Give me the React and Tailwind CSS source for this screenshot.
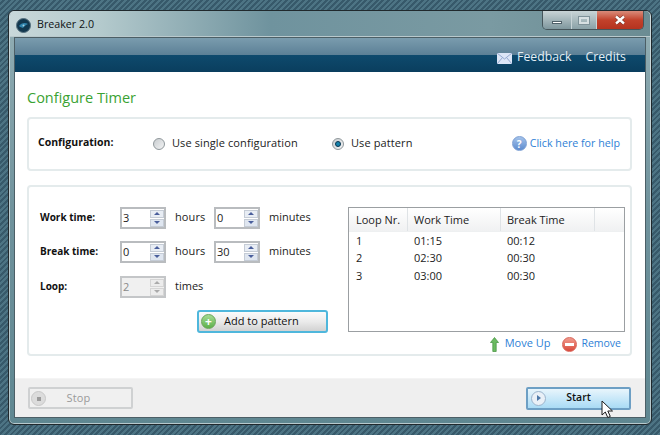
const font = "font-['Open_Sans','Noto_Sans',sans-serif]";

const rows = [
  { loop: "1", work: "01:15", rest: "00:12" },
  { loop: "2", work: "02:30", rest: "00:30" },
  { loop: "3", work: "03:00", rest: "00:30" },
];

function Spinner({ value, disabled }) {
  return (
    <div className={`flex h-[22px] w-[46px] items-center border-2 ${disabled ? "border-[#c4c6c8] bg-[#f0f0f0]" : "border-[#b9bcbf] bg-white"}`}>
      <input
        readOnly
        value={value}
        className={`h-full w-[28px] bg-transparent pb-[1px] pl-[1px] text-[11px] outline-none ${disabled ? "text-[#8a8a8a]" : "text-[#222]"}`}
      />
      <div className="flex w-[14px] flex-col gap-px">
        <span className={`flex h-[8px] items-center justify-center border ${disabled ? "border-[#d5d5d5] bg-[#ececec]" : "border-[#c5ccd6] bg-[#e8edf4]"}`}>
          <span className={`h-0 w-0 border-x-[3px] border-b-[3px] border-x-transparent ${disabled ? "border-b-[#aaa]" : "border-b-[#4a5f9c]"}`} />
        </span>
        <span className={`flex h-[8px] items-center justify-center border ${disabled ? "border-[#d5d5d5] bg-[#ececec]" : "border-[#c5ccd6] bg-[#dfe6f0]"}`}>
          <span className={`h-0 w-0 border-x-[3px] border-t-[3px] border-x-transparent ${disabled ? "border-t-[#aaa]" : "border-t-[#4a5f9c]"}`} />
        </span>
      </div>
    </div>
  );
}

function Radio({ checked, label, className }) {
  return (
    <label className={`flex items-center gap-[7px] tracking-[0.1px] ${className}`}>
      <span className="flex h-[12px] w-[12px] items-center justify-center rounded-full border border-[#8f979b] bg-gradient-to-br from-[#c9cdd0] to-[#f2f3f4]">
        {checked ? <span className="h-[6px] w-[6px] rounded-full border border-[#0b3550] bg-[#1583ad]" /> : null}
      </span>
      <span className="pb-[2px]">{label}</span>
    </label>
  );
}

function TimeRow({ label, hours, minutes }) {
  return (
    <div className="flex h-[22px] items-center">
      <span className="w-[80px] pb-[2px] text-[10px] font-bold text-[#111]">{label}</span>
      <Spinner value={hours} />
      <span className="ml-[9px] w-[39px] pb-[2px] tracking-[0.1px]">hours</span>
      <Spinner value={minutes} />
      <span className="ml-[9px] pb-[2px]">minutes</span>
    </div>
  );
}

function CircleIcon({ from, to, border, children }) {
  return (
    <span className={`flex h-[15px] w-[15px] items-center justify-center rounded-full border bg-gradient-to-b ${from} ${to} ${border}`}>
      {children}
    </span>
  );
}

function Cursor() {
  return (
    <svg className="absolute left-[601px] top-[400px]" width="13" height="19" viewBox="0 0 13 19">
      <path d="M1 1 L1 15 L4.3 12 L6.8 17.6 L9.3 16.4 L6.8 11 L11.5 11 Z" fill="#fff" stroke="#1c1c1c" strokeWidth="1" strokeLinejoin="round" />
    </svg>
  );
}

export default function App() {
  return (
    <div className={`relative h-[435px] w-[660px] overflow-hidden bg-[#3f6473] bg-[repeating-linear-gradient(135deg,#4d7484_0px,#4d7484_2px,#37596a_2px,#37596a_4px)] pl-[8px] pt-[10px] text-[11px] text-[#222] ${font}`}>
      <div className="flex h-[415px] w-[644px] flex-col rounded-[6px] border border-[#20292d] bg-gradient-to-b from-[#93afb5] via-[#6f929c] to-[#5f8791] pl-[5px] pr-[5px] shadow-[inset_0_0_0_1px_rgba(255,255,255,0.55)]">
        <div className="-ml-[4px] -mr-[4px] flex h-[26px] shrink-0 items-start justify-between rounded-t-[5px] border-b border-[#b9c9cc] bg-[linear-gradient(90deg,#c8d8da_0px,#b4cacd_90px,#6f939e_260px,#7a9aa2_480px,#6b8c93_100%)] pl-[6px] pr-[6px]">
          <div className="flex h-[25px] items-center gap-[6px] pt-[3px]">
            <svg width="15" height="15" viewBox="0 0 15 15">
              <circle cx="7.5" cy="7.5" r="7" fill="#12384f" stroke="#55707e" strokeWidth="1" />
              <path d="M3 8 C5 5 9 4 12 6 C10 7 8 8 7 10 C5.5 9.5 4 9 3 8 Z" fill="#2f84ad" />
              <circle cx="7.5" cy="7.5" r="1" fill="#a8d0e0" />
            </svg>
            <span className="pb-[1px] text-[10.7px] text-[#0e1214]">Breaker 2.0</span>
          </div>
          <div className="flex h-[19px] overflow-hidden rounded-b-[5px] border border-t-0 border-[#46555b]">
            <span className="flex w-[29px] items-center justify-center border-r border-[#c7d3d6] bg-gradient-to-b from-[#c9d4d6] to-[#7f979e]">
              <span className="mt-[5px] h-[3px] w-[10px] border border-[#50616a] bg-white" />
            </span>
            <span className="flex w-[25px] items-center justify-center border-r border-[#c7d3d6] bg-gradient-to-b from-[#c9d4d6] to-[#8aa1a7]">
              <span className="h-[7px] w-[10px] border-2 border-[#d8e0e2] outline outline-1 outline-[#7f9299]" />
            </span>
            <span className="flex w-[46px] items-center justify-center bg-gradient-to-b from-[#d98b7a] via-[#c2412b] to-[#b5331f]">
              <svg width="12" height="10" viewBox="0 0 12 10">
                <path d="M2 1.5 L10 8.5 M10 1.5 L2 8.5" stroke="#6b2a20" strokeWidth="3.6" />
                <path d="M2 1.5 L10 8.5 M10 1.5 L2 8.5" stroke="#fff" strokeWidth="2.4" />
              </svg>
            </span>
          </div>
        </div>

        <div className="flex h-[381px] w-[632px] flex-col border border-[#4c5f66]">
          <div className="flex h-[34px] shrink-0 items-center justify-end bg-[linear-gradient(180deg,#7a9cae_0%,#5c8096_50%,#0e4a6d_50%,#0a3e5e_100%)] pr-[19px] pt-[6px] text-[12.3px] text-[#e4eef4]">
            <svg width="15" height="11" viewBox="0 0 15 11" className="mr-[5px]">
              <rect width="15" height="11" fill="#dce6f7" />
              <path d="M0 0 L7.5 6 L15 0 M0 11 L5.5 4.5 M15 11 L9.5 4.5" fill="none" stroke="#93a8cf" strokeWidth="1" />
            </svg>
            <span className="pb-[2px]">Feedback</span>
            <span className="ml-[14px] pb-[2px]">Credits</span>
          </div>

          <main className="flex h-[306px] shrink-0 flex-col bg-white pl-[12px] pr-[13px]">
            <h1 className="flex h-[45px] shrink-0 items-center pt-[7px] text-[14.5px] font-normal text-[#3aa232]">Configure Timer</h1>

            <section className="flex h-[54px] shrink-0 items-center rounded-[4px] border-2 border-[#e4ebec] pl-[9px] pr-[10px]">
              <span className="w-[115px] pb-[2px] text-[10.5px] font-bold text-[#111]">Configuration:</span>
              <Radio label="Use single configuration" className="w-[179px]" />
              <Radio checked label="Use pattern" />
              <a className="ml-auto flex items-center gap-[3px] text-[10.7px] text-[#2f7fd6]">
                <CircleIcon from="from-[#a5c3ea]" to="to-[#5d8ccf]" border="border-[#7ca0d4]">
                  <span className="text-[10px] font-bold leading-none text-white">?</span>
                </CircleIcon>
                <span className="pb-[2px]">Click here for help</span>
              </a>
            </section>

            <section className="mt-[14px] flex h-[171px] shrink-0 rounded-[4px] border-2 border-[#e4ebec] pl-[11px] pt-[20px]">
              <div className="flex w-[308px] shrink-0 flex-col">
                <TimeRow label="Work time:" hours="3" minutes="0" />
                <div className="mt-[12px]">
                  <TimeRow label="Break time:" hours="0" minutes="30" />
                </div>
                <div className="mt-[13px] flex h-[22px] items-center">
                  <span className="w-[80px] pb-[2px] text-[10px] font-bold text-[#111]">Loop:</span>
                  <Spinner value="2" disabled />
                  <span className="ml-[9px] pb-[2px]">times</span>
                </div>
                <button className="ml-[157px] mt-[12px] flex h-[23px] w-[131px] items-center rounded-[3px] border-2 border-[#4fb7dc] bg-gradient-to-b from-[#fbfbfb] via-[#ebebeb] to-[#d2d2d2] pl-[2px] text-[#111]">
                  <CircleIcon from="from-[#a6dc93]" to="to-[#5cb04a]" border="border-[#6aa65a]">
                    <span className="text-[12px] font-bold leading-none text-white">+</span>
                  </CircleIcon>
                  <span className="ml-[8px] pb-[1px]">Add to pattern</span>
                </button>
              </div>

              <div className="flex w-[277px] shrink-0 flex-col">
                <div className="h-[125px] border border-[#9b9fa2]">
                  <div className="flex h-[24px] border-b border-[#eef0f1] bg-gradient-to-b from-white to-[#f0f1f2] text-[#222]">
                    <span className="flex w-[59px] items-center border-r border-[#dfe3e6] pl-[7px] pt-[2px]">Loop Nr.</span>
                    <span className="flex w-[93px] items-center border-r border-[#dfe3e6] pl-[6px] pt-[2px]">Work Time</span>
                    <span className="flex w-[94px] items-center border-r border-[#dfe3e6] pl-[6px] pt-[2px]">Break Time</span>
                  </div>
                  <div>
                    {rows.map((row) => (
                      <div key={row.loop} className="flex h-[17.5px] items-center">
                        <span className="w-[59px] pl-[7px]">{row.loop}</span>
                        <span className="w-[93px] pl-[6px]">{row.work}</span>
                        <span className="pl-[6px]">{row.rest}</span>
                      </div>
                    ))}
                  </div>
                </div>
                <div className="mt-[3px] flex h-[18px] items-center justify-end pr-[4px] text-[#2f7fd6]">
                  <svg width="9" height="15" viewBox="0 0 9 15" className="mr-[6px]">
                    <path d="M4.5 0.5 L8.5 5.5 L6.2 5.5 L6.2 14.5 L2.8 14.5 L2.8 5.5 L0.5 5.5 Z" fill="#6cbb62" stroke="#3f8f3c" strokeWidth="0.7" />
                  </svg>
                  <span className="pb-[1px]">Move Up</span>
                  <span className="ml-[12px] mr-[4px]">
                    <CircleIcon from="from-[#f09a8e]" to="to-[#d9473a]" border="border-[#d9665a]">
                      <span className="h-[3px] w-[9px] bg-white" />
                    </CircleIcon>
                  </span>
                  <span className="pb-[1px] text-[10.5px]">Remove</span>
                </div>
              </div>
            </section>
          </main>

          <footer className="flex h-[39px] shrink-0 items-center justify-between border-t border-[#f4f4f4] bg-[#efefef] pl-[13px] pr-[14px]">
            <button className="relative flex h-[22px] w-[105px] items-center justify-center rounded-[2px] border-2 border-[#cfd1d2] bg-[#f0f0f0] pr-[4px] tracking-[0.2px] text-[#9a9a9a]">
              <span className="absolute left-[1px] top-[2px] flex h-[15px] w-[15px] items-center justify-center rounded-full border border-[#c8c8c8] bg-[#dcdcdc]">
                <span className="h-[4px] w-[4px] bg-[#9b9b9b]" />
              </span>
              Stop
            </button>
            <button className="relative flex h-[23px] w-[105px] items-center justify-center rounded-[2px] border-2 border-[#6d9fc4] bg-gradient-to-b from-[#e8f5fc] to-[#a9dbf5] text-[10.5px] font-semibold text-[#111]">
              <span className="absolute left-[3px] top-[2px] flex h-[15px] w-[15px] items-center justify-center rounded-full border border-[#9bb4cc] bg-[#e9f0f7]">
                <span className="ml-[1px] h-0 w-0 border-y-[3.5px] border-l-[4px] border-y-transparent border-l-[#4d78a8]" />
              </span>
              Start
            </button>
          </footer>
        </div>
      </div>
      <Cursor />
    </div>
  );
}
